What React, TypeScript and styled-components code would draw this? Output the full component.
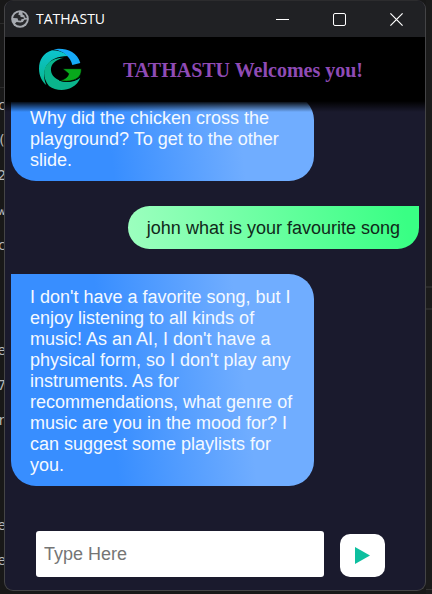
import React from "react";
import styled, { createGlobalStyle } from "styled-components";

const GlobalStyle = createGlobalStyle`
  * { box-sizing: border-box; }
  body { margin: 0; background: #181818; }
  button, input { font: inherit; border: 0; padding: 0; }
`;

const Desktop = styled.div`
  display: grid;
  grid-template-columns: 4px minmax(0, 1fr) 6px;
  height: 100vh;
  overflow: hidden;
  background: #181818;
`;

const EditorStrip = styled.div`
  display: flex;
  flex-direction: column;
  align-items: flex-end;
  padding-top: 88px;
  overflow: hidden;
  color: #b8b8b8;
  font: 14px/35px "DejaVu Sans Mono", monospace;
  white-space: pre;
  background: linear-gradient(#2b2b2b, #2b2b2b) 0 23px / 100% 1px no-repeat,
    linear-gradient(#2b2b2b, #2b2b2b) 0 87px / 100% 1px no-repeat;
`;

const EditorLine = styled.span`
  flex: none;
  height: 35px;
  margin-right: -2px;
`;

const EditorEdge = styled.div`
  background: linear-gradient(#2a2a2a, #2a2a2a) 0 286px / 100% 2px no-repeat,
    linear-gradient(#2a2a2a, #2a2a2a) 0 308px / 100% 2px no-repeat,
    linear-gradient(#333, #333) 0 589px / 100% 1px no-repeat, #1b1b1b;
`;

const Window = styled.main`
  display: flex;
  flex-direction: column;
  min-height: 0;
  margin-bottom: 3px;
  overflow: hidden;
  border: 1px solid #444446;
  border-top-color: #2c2c2e;
  border-radius: 9px;
  background: #1a1a2d;
`;

const TitleBar = styled.header`
  display: flex;
  align-items: center;
  flex: none;
  height: 36px;
  padding-left: 6px;
  background: #202124;
  color: #fff;
`;

const WindowTitle = styled.span`
  flex: 1;
  margin-left: 7px;
  font: 14px/20px "Open Sans", sans-serif;
`;

const WindowButton = styled.button`
  display: grid;
  place-items: center;
  width: 57px;
  height: 36px;
  background: transparent;
  color: #fff;
`;

const Banner = styled.div`
  display: flex;
  align-items: center;
  flex: none;
  z-index: 1;
  height: 75px;
  margin-bottom: -10px;
  padding: 0 0 10px 33px;
  background: linear-gradient(#000 64px, transparent 75px);
`;

const Welcome = styled.h1`
  margin: 0 0 0 41px;
  color: #8f4bb5;
  font: bold 20px/22px "Liberation Serif", serif;
`;

const Messages = styled.section`
  display: flex;
  flex: 1;
  flex-direction: column;
  justify-content: flex-end;
  gap: 25px;
  min-height: 0;
  padding: 0 6px 45px;
  overflow: hidden;
  font: 18px/21px "Liberation Sans", sans-serif;
`;

const Bubble = styled.p<{ $mine?: boolean }>`
  flex: none;
  align-self: ${(p) => (p.$mine ? "flex-end" : "flex-start")};
  width: ${(p) => (p.$mine ? "auto" : "303px")};
  max-width: 303px;
  margin: 0;
  padding: ${(p) => (p.$mine ? "12px 19px 10px" : "13px 19px 10px")};
  border-radius: ${(p) => (p.$mine ? "22px 0 22px 22px" : "0 25px 25px 25px")};
  color: ${(p) => (p.$mine ? "#10291a" : "#f4f9ff")};
  background: ${(p) =>
    p.$mine
      ? "linear-gradient(80deg, #9dffbf 0%, #39ff84 95%)"
      : "linear-gradient(83deg, #388eff 33%, #70adff 75%)"};
`;

const Composer = styled.form`
  display: flex;
  align-items: flex-end;
  flex: none;
  gap: 16px;
  padding: 0 40px 13px 31px;
`;

const TextBox = styled.input`
  flex: 1;
  min-width: 0;
  height: 46px;
  padding: 0 8px;
  border-radius: 3px;
  background: #fff;
  && { font: 18px/21px "Liberation Sans", sans-serif; }
  &::placeholder { color: #757575; opacity: 1; }
`;

const SendButton = styled.button`
  display: grid;
  place-items: center;
  width: 45px;
  height: 43px;
  border-radius: 10px;
  background: #fff;
`;

const Globe = () => (
  <svg width="18" height="18" viewBox="0 0 18 18" aria-hidden="true">
    <circle cx="9" cy="9" r="8.8" fill="#a6aab0" />
    <path d="M8 2.2C4.8 2.6 2.5 4.9 2.1 8L6.5 8.3 7.2 10.4 10 10.7 10.4 9.3 13 8.8 12.6 7.2 9.6 7 9.3 5.2 7.4 4.9Z" fill="#292a2d" />
    <path d="M11.5 2.3 11.6 4.6 13.4 5.4 13.8 7.6 15.9 8.2C15.6 5.4 14 3.2 11.5 2.3ZM15.9 9.6 13.4 9.8 11.8 12 9.2 12.6 5.6 12 4 13.6C8 18 15 15.6 15.9 9.6Z" fill="#292a2d" />
  </svg>
);

const Logo = () => (
  <svg width="44" height="43" viewBox="114 147 132 129" aria-hidden="true">
    <defs>
      <linearGradient id="sweep" x1="0" y1="0" x2="0" y2="1">
        <stop offset="0" stopColor="#0cc4cf" />
        <stop offset="1" stopColor="#08b68c" />
      </linearGradient>
    </defs>
    <path d="M160 151C192 145 231 156 241 192L217 198C211 174 191 156 160 151Z" fill="#16aaf8" />
    <path d="M156 154C130 162 117 184 117 209C117 230 126 248 139 258C122 218 138 171 204 171C190 159 173 154 156 154Z" fill="url(#sweep)" />
    <path d="M192 176C132 176 118 224 147 261C166 276 196 277 216 265C228 258 237 248 241 236C214 257 178 251 159 230C145 210 154 184 192 176Z" fill="#0ab58d" />
    <path d="M188 209H244C245 228 236 238 221 243C207 248 192 248 178 244C193 242 203 236 206 224Z" fill="#08a81c" stroke="#000" strokeWidth="2" />
  </svg>
);

const history = [
  { text: "Why did the chicken cross the playground? To get to the other slide." },
  { text: "john what is your favourite song", mine: true },
  {
    text: "I don't have a favorite song, but I enjoy listening to all kinds of music! As an AI, I don't have a physical form, so I don't play any instruments. As for recommendations, what genre of music are you in the mood for? I can suggest some playlists for you.",
  },
];

const editorLines = ["c", "(", "[2", "w", "c", "", "", "e", "7", "r", "", "", "se", "e"];

export default function App() {
  return (
    <Desktop>
      <GlobalStyle />
      <EditorStrip aria-hidden="true">
        {editorLines.map((line, i) => (
          <EditorLine key={i}>{line}</EditorLine>
        ))}
      </EditorStrip>
      <Window>
        <TitleBar>
          <Globe />
          <WindowTitle>TATHASTU</WindowTitle>
          <WindowButton aria-label="Minimize">
            <svg width="13" height="13" viewBox="0 0 13 13" stroke="currentColor">
              <path d="M0 6.5H13" />
            </svg>
          </WindowButton>
          <WindowButton aria-label="Maximize">
            <svg width="13" height="13" viewBox="0 0 13 13" stroke="currentColor" fill="none">
              <rect x="0.5" y="0.5" width="12" height="12" rx="1.5" />
            </svg>
          </WindowButton>
          <WindowButton aria-label="Close">
            <svg width="13" height="13" viewBox="0 0 13 13" stroke="currentColor" strokeWidth="1.2">
              <path d="M0.4 0.4 12.6 12.6M12.6 0.4 0.4 12.6" />
            </svg>
          </WindowButton>
        </TitleBar>
        <Banner>
          <Logo />
          <Welcome>TATHASTU Welcomes you!</Welcome>
        </Banner>
        <Messages aria-label="Conversation">
          {history.map((m) => (
            <Bubble key={m.text} $mine={m.mine}>
              {m.text}
            </Bubble>
          ))}
        </Messages>
        <Composer onSubmit={(e) => e.preventDefault()}>
          <TextBox type="text" placeholder="Type Here" aria-label="Message" />
          <SendButton type="submit" aria-label="Send">
            <svg width="15" height="17" viewBox="0 0 15 17">
              <path d="M0 0 15 8.5 0 17Z" fill="#0dbf9f" />
            </svg>
          </SendButton>
        </Composer>
      </Window>
      <EditorEdge />
    </Desktop>
  );
}
